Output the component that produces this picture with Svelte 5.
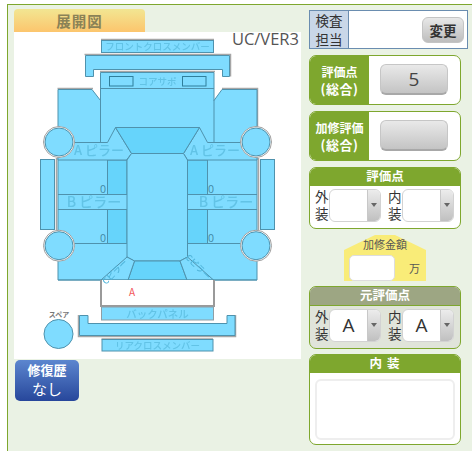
<script>
  const tires = [[59,142],[256,142],[59,245.7],[256,245.7]];
  const grades = [
    { label: ['外','装'], value: '' },
    { label: ['内','装'], value: '' }
  ];
  const origGrades = [
    { label: ['外','装'], value: 'A' },
    { label: ['内','装'], value: 'A' }
  ];
</script>

<div class="page">
  <div class="left">
    <div class="tab">展開図</div>
    <div class="panel">
      <svg class="car" width="287" height="327" viewBox="14 32 287 327" xmlns="http://www.w3.org/2000/svg">
        <g class="edge">
          <path d="M101 39.5H214M84.5 54.5H230.5V76.5M100 71.5H215M57.5 88.5H93M222 88.5H257.5V127" />
          <path d="M56.5 158V232M258.5 158V232" />
          <path d="M78.5 315V336.5H235.5V315M101.5 339H213" />
        </g>
        <rect class="p" x="101.5" y="40.5" width="112" height="12" />
        <path class="p" d="M85.5 55.5H229.5V76.5H222.5V69.5H93.5V76.5H85.5Z" />
        <path class="p" d="M58 89.5H92L100.5 100.5V72.5H214V100.5L222 89.5H257V280H58Z" />
        <path class="l" d="M100.5 88.5H214M100.5 100V143M214 100V143" />
        <rect class="r" x="109.5" y="76.5" width="23.5" height="9.5" />
        <rect class="r" x="182.5" y="76.5" width="23.5" height="9.5" />
        <rect class="w" x="107.5" y="160" width="19.5" height="34.5" />
        <rect class="w" x="107.5" y="209.5" width="19.5" height="34" />
        <rect class="w" x="187.5" y="160" width="20" height="34.5" />
        <rect class="w" x="187.5" y="209.5" width="20" height="34" />
        <path class="l" d="M58 194.5H127M58 209.5H127M58 243.5H127M187 194.5H257M187 209.5H257M187 243.5H257" />
        <path class="p" d="M58 142.5H107.5L115.5 127.5L131.5 153.5L126.5 160H58Z" />
        <path class="p" d="M257 142.5H207.5L199.5 127.5L183.5 153.5L187.5 160H257Z" />
        <path class="w" d="M115.5 127.5H199.5L183.5 153.5H131.5Z" />
        <path class="p" d="M131.5 153.5H183.5L187.5 160V257L180 261H134.5L127 257V160Z" />
        <path class="w" d="M134.5 261H180L187 280H128Z" />
        <path class="p" d="M127 257L134.5 261L128 280H101Z" />
        <path class="p" d="M187.5 257L180 261L187 280H213.5Z" />
        <path class="l" d="M58 280H257" />
        <rect class="p" x="40.5" y="159.5" width="14" height="70" />
        <rect class="p" x="260.5" y="159.5" width="14" height="70" />
        <path class="g" d="M101 280V306H214V280" />
        <rect class="p gb" x="101.5" y="307" width="112" height="13" />
        <path class="p" d="M79.5 315.5H88V323.5H227V315.5H235V335.5H79.5Z" />
        <rect class="p" x="102" y="339.5" width="111" height="11.5" />
        {#each tires as [cx, cy]}
          <circle class="ring" {cx} {cy} r="15.5" />
          <circle class="p" {cx} {cy} r="14" />
        {/each}
        <circle class="p" cx="58.5" cy="334" r="14.5" />
        <g class="t">
          <text x="157.5" y="49.5" font-size="9.5">フロントクロスメンバー</text>
          <text x="157.5" y="84.5" font-size="9.5">コアサポ</text>
          <text x="99" y="155" font-size="13">A ピラー</text>
          <text x="215" y="155" font-size="13">A ピラー</text>
          <text x="94" y="207" font-size="14">B ピラー</text>
          <text x="226" y="207" font-size="14">B ピラー</text>
          <text x="157.5" y="317.5" font-size="10.5">バックパネル</text>
          <text x="157.5" y="349" font-size="9.5">リアクロスメンバー</text>
          <text class="cp" transform="translate(117 274) rotate(-45)" font-size="8.5">Cピラー</text>
          <text class="cp" transform="translate(196 269) rotate(45)" font-size="8.5">Cピラー</text>
        </g>
        <g class="z">
          <text x="103" y="193" font-size="10.5">0</text>
          <text x="103" y="242" font-size="10.5">0</text>
          <text x="211" y="193" font-size="10.5">0</text>
          <text x="211" y="242" font-size="10.5">0</text>
        </g>
        <text class="red" x="132" y="296" font-size="10">A</text>
        <text class="spare" x="59" y="317" font-size="7">スペア</text>
        <text class="ver" x="299" y="45" font-size="16.5">UC/VER3</text>
      </svg>
    </div>
    <button class="repair"><span class="r1">修復歴</span><span class="r2">なし</span></button>
  </div>

  <div class="right">
    <div class="inspector">
      <div class="ins-label">検査<br />担当</div>
      <div class="ins-body"><button class="change">変更</button></div>
    </div>

    <div class="score">
      <div class="score-label"><span>評価点</span><span class="sum">(総合)</span></div>
      <div class="score-body"><button class="gray">5</button></div>
    </div>
    <div class="score">
      <div class="score-label"><span>加修評価</span><span class="sum">(総合)</span></div>
      <div class="score-body"><button class="gray"></button></div>
    </div>

    <section class="card grade">
      <h3>評価点</h3>
      <div class="selects">
        {#each grades as g}
          <div class="pick">
            <span class="pick-label">{g.label[0]}<br />{g.label[1]}</span>
            <div class="sel"><span class="sel-val">{g.value}</span><span class="sel-arrow"><i></i></span></div>
          </div>
        {/each}
      </div>
    </section>

    <div class="house">
      <div class="house-title">加修金額</div>
      <div class="house-row"><div class="amount"></div><span class="man">万</span></div>
    </div>

    <section class="card grade orig">
      <h3>元評価点</h3>
      <div class="selects">
        {#each origGrades as g}
          <div class="pick">
            <span class="pick-label">{g.label[0]}<br />{g.label[1]}</span>
            <div class="sel"><span class="sel-val">{g.value}</span><span class="sel-arrow"><i></i></span></div>
          </div>
        {/each}
      </div>
    </section>

    <section class="card interior">
      <h3>内 装</h3>
      <div class="notes"></div>
    </section>
  </div>
</div>

<style>
  :global(body) {
    margin: 0;
    background: #fff;
    overflow: hidden;
    font-family: "Noto Sans CJK JP", "Noto Sans", sans-serif;
  }
  .page {
    box-sizing: border-box;
    margin: 4px 0 0 7px;
    width: 465px;
    height: 447px;
    border-left: 1px solid #7ea72e;
    border-top: 1px solid #7ea72e;
    background: #eaf2e4;
    display: flex;
    align-items: flex-start;
  }
  .left {
    margin: 4px 0 0 6px;
    width: 287px;
  }
  .tab {
    width: 131px;
    height: 23px;
    box-sizing: border-box;
    border-radius: 4px 4px 0 0;
    background: linear-gradient(#f2e692, #fcc56d);
    color: #8a8256;
    font-weight: 700;
    font-size: 14.5px;
    line-height: 23px;
    text-align: center;
    letter-spacing: 1px;
  }
  .panel {
    background: #fff;
    height: 327px;
  }
  .car {
    display: block;
    font-family: "Noto Sans CJK JP", "Noto Sans", sans-serif;
  }
  .edge path { fill: none; stroke: #a6a6a6; stroke-width: 1.5; }
  .p { fill: #7fdcff; stroke: #4f92ad; stroke-width: 1; }
  .l { fill: none; stroke: #4f92ad; stroke-width: 1; }
  .w { fill: #66d4fb; stroke: #4f92ad; stroke-width: 1; }
  .r { fill: #7fdcff; stroke: #2f7f9c; stroke-width: 1; }
  .g { fill: #fff; stroke: #9a9a9a; stroke-width: 2; }
  .gb { stroke: #8f9ea5; }
  .ring { fill: #fff; stroke: #a0a0a0; stroke-width: 1; }
  .t { filter: blur(0.35px); }
  .t text { fill: #62c3e6; font-weight: 500; text-anchor: middle; }
  .t .cp { fill: #4fb4da; }
  .z text { fill: #3f87a3; text-anchor: middle; font-family: "Open Sans", sans-serif; }
  .red { fill: #f2555a; text-anchor: middle; }
  .spare { fill: #777; font-weight: 700; text-anchor: middle; }
  .ver { fill: #555; text-anchor: end; font-family: "Open Sans", sans-serif; }

  .repair {
    display: flex;
    flex-direction: column;
    align-items: center;
    margin: 1px 0 0 1px;
    width: 64px;
    height: 41px;
    padding: 1px 0 0;
    border: 0;
    border-radius: 5px;
    background: linear-gradient(#5c86cf, #27479b);
    color: #fff;
    font-family: inherit;
  }
  .r1 { font-size: 13px; font-weight: 700; line-height: 18px; }
  .r2 { font-size: 15px; line-height: 20px; }

  .right {
    margin: 5px 0 0 8px;
    width: 152px;
    display: flex;
    flex-direction: column;
  }
  .inspector {
    box-sizing: border-box;
    width: 159px;
    height: 39px;
    border: 1px solid #6a8db0;
    display: flex;
    background: #fff;
  }
  .ins-label {
    width: 38px;
    background: #c9d7e8;
    border-right: 1px solid #6a8db0;
    color: #333;
    font-size: 13.5px;
    line-height: 18.5px;
    text-align: center;
  }
  .ins-body { flex: 1; display: flex; justify-content: flex-end; align-items: center; padding-right: 3px; }
  .change {
    width: 42px;
    height: 26px;
    padding: 0;
    border: 1px solid #c4c4c4;
    border-radius: 6px;
    background: linear-gradient(#e8e8e8, #bdbdbd);
    color: #333;
    font-family: inherit;
    font-size: 13.5px;
    font-weight: 700;
  }
  .score {
    box-sizing: border-box;
    margin-top: 6px;
    height: 50px;
    border: 1px solid #7ea72e;
    border-radius: 7px;
    background: #fff;
    display: flex;
    overflow: hidden;
  }
  .score-label {
    width: 59px;
    background: #7ea72e;
    color: #fff;
    font-size: 12px;
    font-weight: 700;
    line-height: 17px;
    text-align: center;
    display: flex;
    flex-direction: column;
    align-items: center;
    justify-content: center;
  }
  .sum { font-size: 13px; letter-spacing: 0.5px; }
  .score-body { flex: 1; padding: 8px 0 0 11px; }
  .gray {
    display: block;
    box-sizing: border-box;
    width: 68px;
    height: 31px;
    padding: 0;
    border: 1px solid #c6c6c6;
    border-bottom: 2px solid #a8a8a8;
    border-radius: 6px;
    background: linear-gradient(#e9e9e9, #c4c4c4);
    color: #444;
    font-family: "Open Sans", sans-serif;
    font-size: 19px;
    line-height: 28px;
  }
  .card {
    box-sizing: border-box;
    border: 1px solid #7ea72e;
    border-radius: 7px;
    background: #fff;
    overflow: hidden;
  }
  .card h3 {
    margin: -1px -1px 0;
    height: 19px;
    background: #7ea72e;
    color: #fff;
    font-size: 12.5px;
    font-weight: 700;
    line-height: 18px;
    text-align: center;
  }
  .grade { margin-top: 6px; height: 62px; }
  .selects { display: flex; padding: 2px 0 0 5px; gap: 7px; }
  .pick { display: flex; align-items: center; }
  .pick-label {
    width: 14px;
    color: #333;
    font-size: 13.5px;
    line-height: 17px;
  }
  .sel {
    box-sizing: border-box;
    width: 52px;
    height: 33px;
    border: 1px solid #d2d2d2;
    border-radius: 6px;
    background: #fff;
    display: flex;
    overflow: hidden;
  }
  .sel-val {
    flex: 1;
    text-align: center;
    color: #333;
    font-family: "Open Sans", sans-serif;
    font-size: 19px;
    line-height: 30px;
  }
  .sel-arrow {
    width: 12px;
    border-left: 1px solid #c8c8c8;
    background: linear-gradient(#ececec, #c0c0c0);
    display: flex;
    align-items: center;
    justify-content: center;
  }
  .sel-arrow i {
    width: 0;
    height: 0;
    border: 3.5px solid transparent;
    border-top: 4px solid #666;
    border-bottom: 0;
  }
  .house {
    box-sizing: border-box;
    margin: 6px 0 0 35px;
    width: 82px;
    height: 46px;
    background: #f9ec78;
    clip-path: polygon(0 15px, 31px 0, 51px 0, 100% 15px, 100% 100%, 0 100%);
  }
  .house-title {
    text-align: center;
    color: #555;
    font-size: 11px;
    line-height: 18px;
  }
  .house-row { display: flex; align-items: center; padding: 2px 0 0 5px; }
  .amount {
    box-sizing: border-box;
    width: 46px;
    height: 26px;
    background: #fff;
    border: 1px solid #ddd;
    border-radius: 5px;
  }
  .man { margin-left: 14px; color: #555; font-size: 11px; }
  .orig { margin-top: 5px; height: 63px; background: #e0e4da; }
  .orig h3 { background: #9da683; border-bottom: 1px solid #7ea72e; }
  .interior { margin-top: 5px; height: 91px; }
  .interior h3 { letter-spacing: 1px; }
  .notes {
    box-sizing: border-box;
    margin: 6px 5px 0;
    height: 61px;
    border: 2px solid #eee;
    border-radius: 6px;
  }
</style>
